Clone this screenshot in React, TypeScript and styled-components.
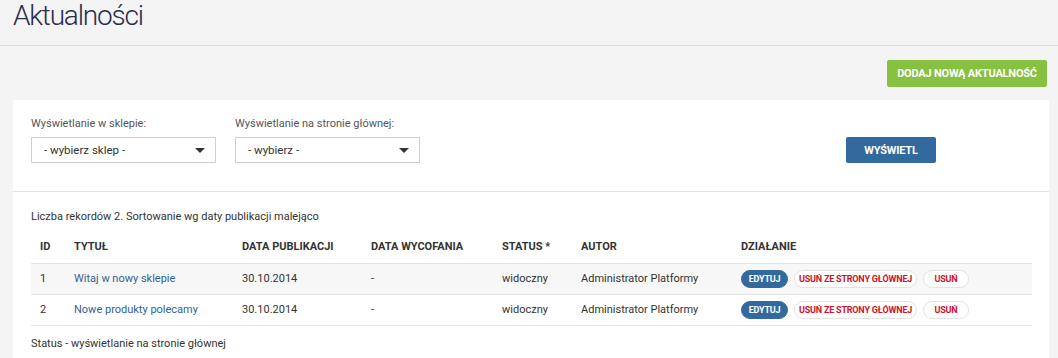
import React from "react";
import styled, { createGlobalStyle } from "styled-components";

const GlobalStyle = createGlobalStyle`
  html, body {
    margin: 0;
    padding: 0;
    background: #f4f4f4;
    font-family: Roboto, "Liberation Sans", Arial, sans-serif;
    color: #333;
  }
  * { box-sizing: border-box; }
`;

const StyledHeader = styled.header`
  height: 46px;
  padding: 0 13px;
  border-bottom: 1px solid #dcdcdc;
  display: flex;
  align-items: flex-start;
`;

const StyledTitle = styled.h1`
  margin: 0;
  padding-top: 0;
  font-size: 28px;
  line-height: 32px;
  font-weight: 300;
  color: #2a2e4c;
  letter-spacing: -1.2px;
`;

const StyledToolbar = styled.div`
  display: flex;
  justify-content: flex-end;
  padding: 14px 11px 13px 13px;
`;

const StyledButton = styled.button<{ $variant: "green" | "blue" }>`
  border: 0;
  border-radius: 2px;
  height: ${(p) => (p.$variant === "green" ? "27px" : "26px")};
  padding: 0 ${(p) => (p.$variant === "green" ? "9px" : "0")};
  width: ${(p) => (p.$variant === "green" ? "160px" : "90px")};
  background: ${(p) => (p.$variant === "green" ? "#86c140" : "#336a9e")};
  color: #fff;
  font-family: Roboto, "Liberation Sans", Arial, sans-serif;
  font-weight: 700;
  font-size: 11px;
  letter-spacing: -0.2px;
  cursor: pointer;
`;

const StyledPanel = styled.section`
  background: #fff;
  margin: 0 9px 0 13px;
  min-height: 260px;
`;

const StyledFilters = styled.div`
  display: flex;
  align-items: flex-end;
  padding: 17px 18px 28px 18px;
  border-bottom: 1px solid #e4e4e4;
`;

const StyledField = styled.div`
  display: flex;
  flex-direction: column;
  width: 185px;
  margin-right: 19px;
`;

const StyledLabel = styled.label`
  font-size: 11px;
  line-height: 13px;
  color: #555;
  margin-bottom: 7px;
`;

const StyledSelect = styled.div`
  height: 26px;
  border: 1px solid #cfcfcf;
  display: flex;
  align-items: center;
  justify-content: space-between;
  padding: 0 10px 0 12px;
  font-size: 11.5px;
  color: #333;
`;

const StyledCaret = styled.span`
  width: 0;
  height: 0;
  border-left: 5px solid transparent;
  border-right: 5px solid transparent;
  border-top: 5px solid #333;
`;

const StyledSubmit = styled.div`
  margin-left: 407px;
`;

const StyledList = styled.div`
  padding: 18px 17px 0 18px;
`;

const StyledInfo = styled.p`
  margin: 0 0 7px 0;
  font-size: 11px;
  line-height: 14px;
  color: #333;
`;

const StyledTable = styled.table`
  width: 1001px;
  border-collapse: collapse;
  table-layout: fixed;
  font-size: 11px;
`;

const StyledTh = styled.th<{ $w?: number }>`
  width: ${(p) => (p.$w ? `${p.$w}px` : "auto")};
  text-align: left;
  font-weight: 700;
  font-size: 11px;
  color: #333;
  height: 32px;
  padding: 0 9px;
  border-bottom: 1px solid #e4e4e4;
`;

const StyledRow = styled.tr<{ $striped?: boolean }>`
  background: ${(p) => (p.$striped ? "#f7f7f7" : "#fff")};
  border-bottom: 1px solid #e4e4e4;
`;

const StyledTd = styled.td`
  height: 31px;
  padding: 0 9px;
  color: #333;
  white-space: nowrap;
`;

const StyledLink = styled.a`
  color: #2f5f95;
  text-decoration: none;
`;

const StyledActions = styled.div`
  display: flex;
  gap: 6px;
`;

const StyledPill = styled.button<{ $primary?: boolean; $w: number }>`
  height: 18px;
  width: ${(p) => p.$w}px;
  border-radius: 9px;
  border: 1px solid ${(p) => (p.$primary ? "#336a9e" : "#e3e3e3")};
  background: ${(p) => (p.$primary ? "#336a9e" : "#fff")};
  color: ${(p) => (p.$primary ? "#fff" : "#d0112b")};
  font-family: Roboto, "Liberation Sans", Arial, sans-serif;
  font-weight: 700;
  font-size: 9px;
  letter-spacing: -0.2px;
  padding: 0;
  cursor: pointer;
`;

const StyledFooterNote = styled.p`
  margin: 0;
  padding: 11px 0 12px 0;
  font-size: 11px;
  line-height: 14px;
  color: #333;
`;

const rows = [
  { id: 1, title: "Witaj w nowy sklepie", published: "30.10.2014", withdrawn: "-", status: "widoczny", author: "Administrator Platformy" },
  { id: 2, title: "Nowe produkty polecamy", published: "30.10.2014", withdrawn: "-", status: "widoczny", author: "Administrator Platformy" },
];

const App: React.FC = () => {
  return (
    <>
      <GlobalStyle />
      <StyledHeader>
        <StyledTitle>Aktualności</StyledTitle>
      </StyledHeader>

      <StyledToolbar>
        <StyledButton $variant="green">DODAJ NOWĄ AKTUALNOŚĆ</StyledButton>
      </StyledToolbar>

      <StyledPanel>
        {/* filters */}
        <StyledFilters>
          <StyledField>
            <StyledLabel>Wyświetlanie w sklepie:</StyledLabel>
            <StyledSelect>
              <span>- wybierz sklep -</span>
              <StyledCaret />
            </StyledSelect>
          </StyledField>
          <StyledField>
            <StyledLabel>Wyświetlanie na stronie głównej:</StyledLabel>
            <StyledSelect>
              <span>- wybierz -</span>
              <StyledCaret />
            </StyledSelect>
          </StyledField>
          <StyledSubmit>
            <StyledButton $variant="blue">WYŚWIETL</StyledButton>
          </StyledSubmit>
        </StyledFilters>

        <StyledList>
          <StyledInfo>Liczba rekordów 2. Sortowanie wg daty publikacji malejąco</StyledInfo>
          <StyledTable>
            <thead>
              <tr>
                <StyledTh $w={34}>ID</StyledTh>
                <StyledTh $w={168}>TYTUŁ</StyledTh>
                <StyledTh $w={129}>DATA PUBLIKACJI</StyledTh>
                <StyledTh $w={131}>DATA WYCOFANIA</StyledTh>
                <StyledTh $w={79}>STATUS *</StyledTh>
                <StyledTh $w={160}>AUTOR</StyledTh>
                <StyledTh>DZIAŁANIE</StyledTh>
              </tr>
            </thead>
            <tbody>
              {rows.map((row, index) => (
                <StyledRow key={row.id} $striped={index % 2 === 0}>
                  <StyledTd>{row.id}</StyledTd>
                  <StyledTd>
                    <StyledLink href="#">{row.title}</StyledLink>
                  </StyledTd>
                  <StyledTd>{row.published}</StyledTd>
                  <StyledTd>{row.withdrawn}</StyledTd>
                  <StyledTd>{row.status}</StyledTd>
                  <StyledTd>{row.author}</StyledTd>
                  <StyledTd>
                    <StyledActions>
                      <StyledPill $primary $w={47}>EDYTUJ</StyledPill>
                      <StyledPill $w={123}>USUŃ ZE STRONY GŁÓWNEJ</StyledPill>
                      <StyledPill $w={46}>USUŃ</StyledPill>
                    </StyledActions>
                  </StyledTd>
                </StyledRow>
              ))}
            </tbody>
          </StyledTable>
          <StyledFooterNote>Status - wyświetlanie na stronie głównej</StyledFooterNote>
        </StyledList>
      </StyledPanel>
    </>
  );
};

export default App;
